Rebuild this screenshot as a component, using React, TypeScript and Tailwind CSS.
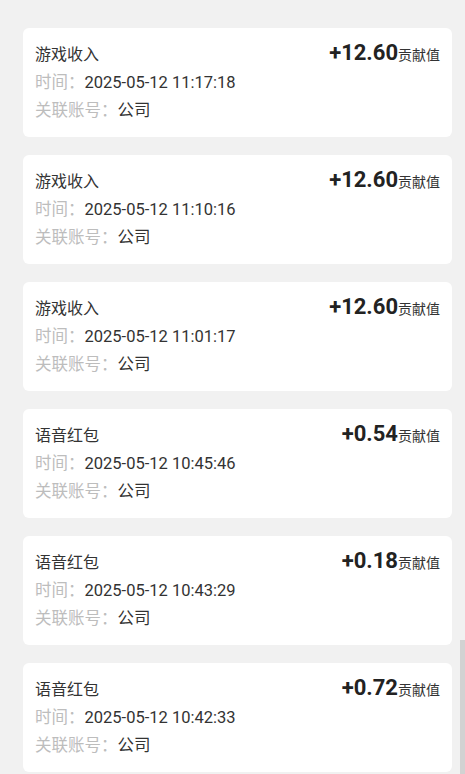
import React from "react";

type Record = {
  title: string;
  amount: string;
  time: string;
  account: string;
};

const records: Record[] = [
  { title: "游戏收入", amount: "+12.60", time: "2025-05-12 11:17:18", account: "公司" },
  { title: "游戏收入", amount: "+12.60", time: "2025-05-12 11:10:16", account: "公司" },
  { title: "游戏收入", amount: "+12.60", time: "2025-05-12 11:01:17", account: "公司" },
  { title: "语音红包", amount: "+0.54", time: "2025-05-12 10:45:46", account: "公司" },
  { title: "语音红包", amount: "+0.18", time: "2025-05-12 10:43:29", account: "公司" },
  { title: "语音红包", amount: "+0.72", time: "2025-05-12 10:42:33", account: "公司" },
];

function RecordCard({ item }: { item: Record }) {
  return (
    <div className="rounded-[6px] bg-white pl-3 pr-3 pt-[11px] pb-[12px]">
      {/* title + amount */}
      <div className="flex items-baseline justify-between leading-[28px]">
        <p className="text-[16px] text-[#333]">{item.title}</p>
        <p className="flex items-baseline text-[#222]">
          <span className="text-[22px] font-bold">{item.amount}</span>
          <span className="text-[14px] text-[#333]">贡献值</span>
        </p>
      </div>
      <div className="flex items-baseline text-[16.5px] leading-[28px]">
        <span className="text-[#bdbdbd]">时间：</span>
        <span className="text-[#333]">{item.time}</span>
      </div>
      <div className="flex items-baseline text-[16.5px] leading-[28px]">
        <span className="text-[#bdbdbd]">关联账号：</span>
        <span className="text-[#333]">{item.account}</span>
      </div>
    </div>
  );
}

export default function App() {
  return (
    <div
      className="relative h-[774px] w-[465px] overflow-hidden bg-[#f1f1f1]"
      style={{ fontFamily: 'Roboto, "Noto Sans CJK SC", sans-serif' }}
    >
      <div className="flex flex-col gap-[18px] pt-[28px] pl-[23px] pr-[13px]">
        {records.map((item, index) => (
          <RecordCard key={index} item={item} />
        ))}
      </div>
      {/* scrollbar thumb */}
      <div className="absolute right-0 top-[640px] h-[134px] w-[5px] bg-[#d2d2d2]" />
    </div>
  );
}
